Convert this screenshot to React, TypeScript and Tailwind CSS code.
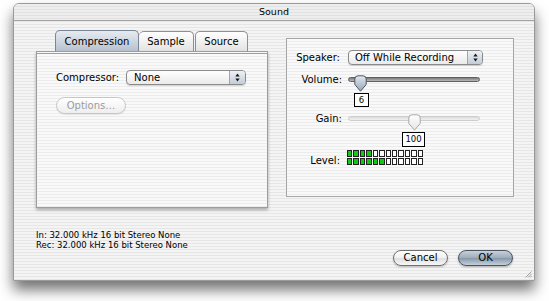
import React from 'react';

const stripes =
  'bg-[repeating-linear-gradient(180deg,#f4f4f4_0px,#f4f4f4_2px,#e6e6e6_2px,#e6e6e6_3px)]';
const lightStripes =
  'bg-[repeating-linear-gradient(180deg,#f9f9f9_0px,#f9f9f9_2px,#ececec_2px,#ececec_3px)]';

function UpDown() {
  return (
    <svg width="5" height="9" viewBox="0 0 5 9">
      <path d="M2.5 0.6 L4.7 3.6 H0.3 Z M2.5 8.4 L4.7 5.4 H0.3 Z" fill="#1a1a1a" />
    </svg>
  );
}

function Thumb({ active }: { active: boolean }) {
  const id = active ? 'thumbActive' : 'thumbIdle';
  return (
    <svg width="13" height="17" viewBox="0 0 13 17">
      <defs>
        <linearGradient id={id} x1="0" y1="0" x2="0" y2="1">
          <stop offset="0" stopColor={active ? '#e2e8ef' : '#ffffff'} />
          <stop offset="1" stopColor={active ? '#97a6b8' : '#e4e4e4'} />
        </linearGradient>
      </defs>
      <path
        d="M0.8 4 Q0.8 0.8 4 0.8 H9 Q12.2 0.8 12.2 4 V9.5 L6.5 16.2 L0.8 9.5 Z"
        fill={`url(#${id})`}
        stroke={active ? '#4d5562' : '#a9a9a9'}
        strokeWidth="1"
      />
    </svg>
  );
}

function Meter({ lit }: { lit: number }) {
  const cells = Array.from({ length: 12 }, (_, i) => i < lit);
  return (
    <div className="flex w-[76px] gap-[1px]">
      {cells.map((on, i) => (
        <div
          key={i}
          className={`h-[7px] flex-1 border border-[#222] ${on ? 'bg-[#10cc10]' : 'bg-white'}`}
        />
      ))}
    </div>
  );
}

export default function App() {
  return (
    <div className="h-[301px] w-[549px] overflow-hidden bg-white pt-[3px] pl-[13px] font-['DejaVu_Sans',sans-serif] text-black">
      <div
        className={`relative flex h-[278px] w-[522px] flex-col rounded-t-[6px] border border-[#9a9a9a] ${stripes} shadow-[0_9px_14px_rgba(0,0,0,0.55)]`}
      >
        {/* title bar */}
        <div className="flex h-[17px] items-center justify-center rounded-t-[5px] border-b border-[#a3a3a3] bg-[repeating-linear-gradient(180deg,#eeeeee_0px,#eeeeee_2px,#e1e1e1_2px,#e1e1e1_3px)] text-[9.5px] leading-none">
          Sound
        </div>

        {/* body */}
        <div className="flex pl-[22px]">
          {/* tab view */}
          <div className="flex w-[232px] flex-col pt-[9px]">
            <div className="flex h-[21px] items-end pl-[19px]">
              <div className="flex h-[21px] w-[84px] items-center justify-center rounded-t-[5px] border border-b-0 border-[#7b8694] bg-[linear-gradient(180deg,#e6ebf1,#b7c2cf)] text-[10px]">
                Compression
              </div>
              <div className="flex h-[20px] w-[55px] items-center justify-center rounded-t-[5px] border border-b-0 border-l-0 border-[#8f8f8f] bg-[linear-gradient(180deg,#ffffff,#e3e3e3)] text-[10px]">
                Sample
              </div>
              <div className="ml-[1px] flex h-[20px] w-[53px] items-center justify-center rounded-t-[5px] border border-b-0 border-[#8f8f8f] bg-[linear-gradient(180deg,#ffffff,#e3e3e3)] text-[10px]">
                Source
              </div>
            </div>
            <div
              className={`h-[157px] border border-double border-t-[3px] border-[#9d9d9d] ${lightStripes} pt-[16px] pl-[19px] shadow-[0_2px_3px_rgba(0,0,0,0.3)]`}
            >
              <div className="flex items-center gap-[7px]">
                <span className="text-[10px]">Compressor:</span>
                <div className="flex h-[15px] w-[120px] items-stretch rounded-[4px] border border-[#8a8a8a] bg-[linear-gradient(180deg,#ffffff,#eaeaea)] shadow-[0_1px_1px_rgba(0,0,0,0.15)]">
                  <span className="flex-1 pl-[7px] text-[10px] leading-[13px]">None</span>
                  <span className="flex w-[16px] items-center justify-center rounded-r-[3px] border-l border-[#a5a5a5] bg-[linear-gradient(180deg,#eef2f6,#c3ccd7)]">
                    <UpDown />
                  </span>
                </div>
              </div>
              <div className="mt-[12px] flex h-[17px] w-[70px] items-center justify-center rounded-full border border-[#c6c6c6] bg-[linear-gradient(180deg,#ffffff,#eeeeee)] text-[10px] text-[#9b9b9b] shadow-[0_1px_1px_rgba(0,0,0,0.08)]">
                Options…
              </div>
            </div>
          </div>

          {/* speaker group */}
          <div
            className={`mt-[17px] ml-[18px] h-[159px] w-[228px] border border-[#a6a6a6] ${lightStripes} pt-[11px]`}
          >
            <div className="flex h-[15px] items-center">
              <span className="w-[53px] text-right text-[10px]">Speaker:</span>
              <div className="ml-[8px] flex h-[15px] w-[135px] items-stretch rounded-[4px] border border-[#8a8a8a] bg-[linear-gradient(180deg,#ffffff,#eaeaea)] shadow-[0_1px_1px_rgba(0,0,0,0.15)]">
                <span className="flex-1 pl-[6px] text-[10px] leading-[13px]">Off While Recording</span>
                <span className="flex w-[15px] items-center justify-center rounded-r-[3px] border-l border-[#a5a5a5] bg-[linear-gradient(180deg,#eef2f6,#c3ccd7)]">
                  <UpDown />
                </span>
              </div>
            </div>

            <div className="mt-[8px] flex h-[13px] items-center">
              <span className="w-[55px] text-right text-[10px]">Volume:</span>
              <div className="relative ml-[6px] flex h-[13px] w-[132px] items-center">
                <div className="h-[5px] w-full rounded-full border border-[#5f5f5f] bg-[linear-gradient(180deg,#7e7e7e,#b9b9b9)]" />
                <div className="absolute top-[2px] left-[6px]">
                  <Thumb active />
                </div>
                <div className="absolute top-[20px] left-[6px] flex h-[14px] w-[15px] items-center justify-center border border-black bg-white text-[8.5px]">
                  6
                </div>
              </div>
            </div>

            <div className="mt-[26px] flex h-[13px] items-center">
              <span className="w-[55px] text-right text-[10px]">Gain:</span>
              <div className="relative ml-[6px] flex h-[13px] w-[132px] items-center">
                <div className="h-[5px] w-full rounded-full border border-[#cdcdcd] bg-[linear-gradient(180deg,#dcdcdc,#f0f0f0)]" />
                <div className="absolute top-[2px] left-[60px]">
                  <Thumb active={false} />
                </div>
                <div className="absolute top-[20px] left-[54px] flex h-[15px] w-[23px] items-center justify-center border border-black bg-white text-[8.5px]">
                  100
                </div>
              </div>
            </div>

            <div className="mt-[25px] flex items-start">
              <span className="mt-[5px] w-[53px] text-right text-[10px] leading-[12px]">Level:</span>
              <div className="ml-[7px] flex flex-col gap-[1px]">
                <Meter lit={4} />
                <Meter lit={6} />
              </div>
            </div>
          </div>
        </div>

        {/* format info */}
        <div className="mt-[22px] pl-[22px] text-[8.5px] leading-[10px]">
          <div>In: 32.000 kHz 16 bit Stereo None</div>
          <div>Rec: 32.000 kHz 16 bit Stereo None</div>
        </div>

        {/* buttons */}
        <div className="flex justify-end gap-[10px] pr-[21px]">
          <button className="flex h-[16px] w-[55px] items-center justify-center rounded-full border border-[#6f6f6f] bg-[linear-gradient(180deg,#ffffff_0%,#f0f0f0_50%,#dedede_51%,#f7f7f7_100%)] text-[10px] leading-none shadow-[0_1px_2px_rgba(0,0,0,0.25)]">
            Cancel
          </button>
          <button className="flex h-[16px] w-[55px] items-center justify-center rounded-full border border-[#4b5562] bg-[linear-gradient(180deg,#c7d0da_0%,#9eabb9_50%,#8796a7_51%,#c4d0dc_100%)] text-[10px] leading-none shadow-[0_1px_2px_rgba(0,0,0,0.3)]">
            OK
          </button>
        </div>

        {/* resize grip */}
        <svg className="absolute right-[2px] bottom-[2px]" width="8" height="8" viewBox="0 0 8 8">
          <path d="M7.5 1.5 L1.5 7.5 M7.5 4 L4 7.5 M7.5 6.3 L6.3 7.5" stroke="#8a8a8a" strokeWidth="0.8" />
        </svg>
      </div>
    </div>
  );
}
